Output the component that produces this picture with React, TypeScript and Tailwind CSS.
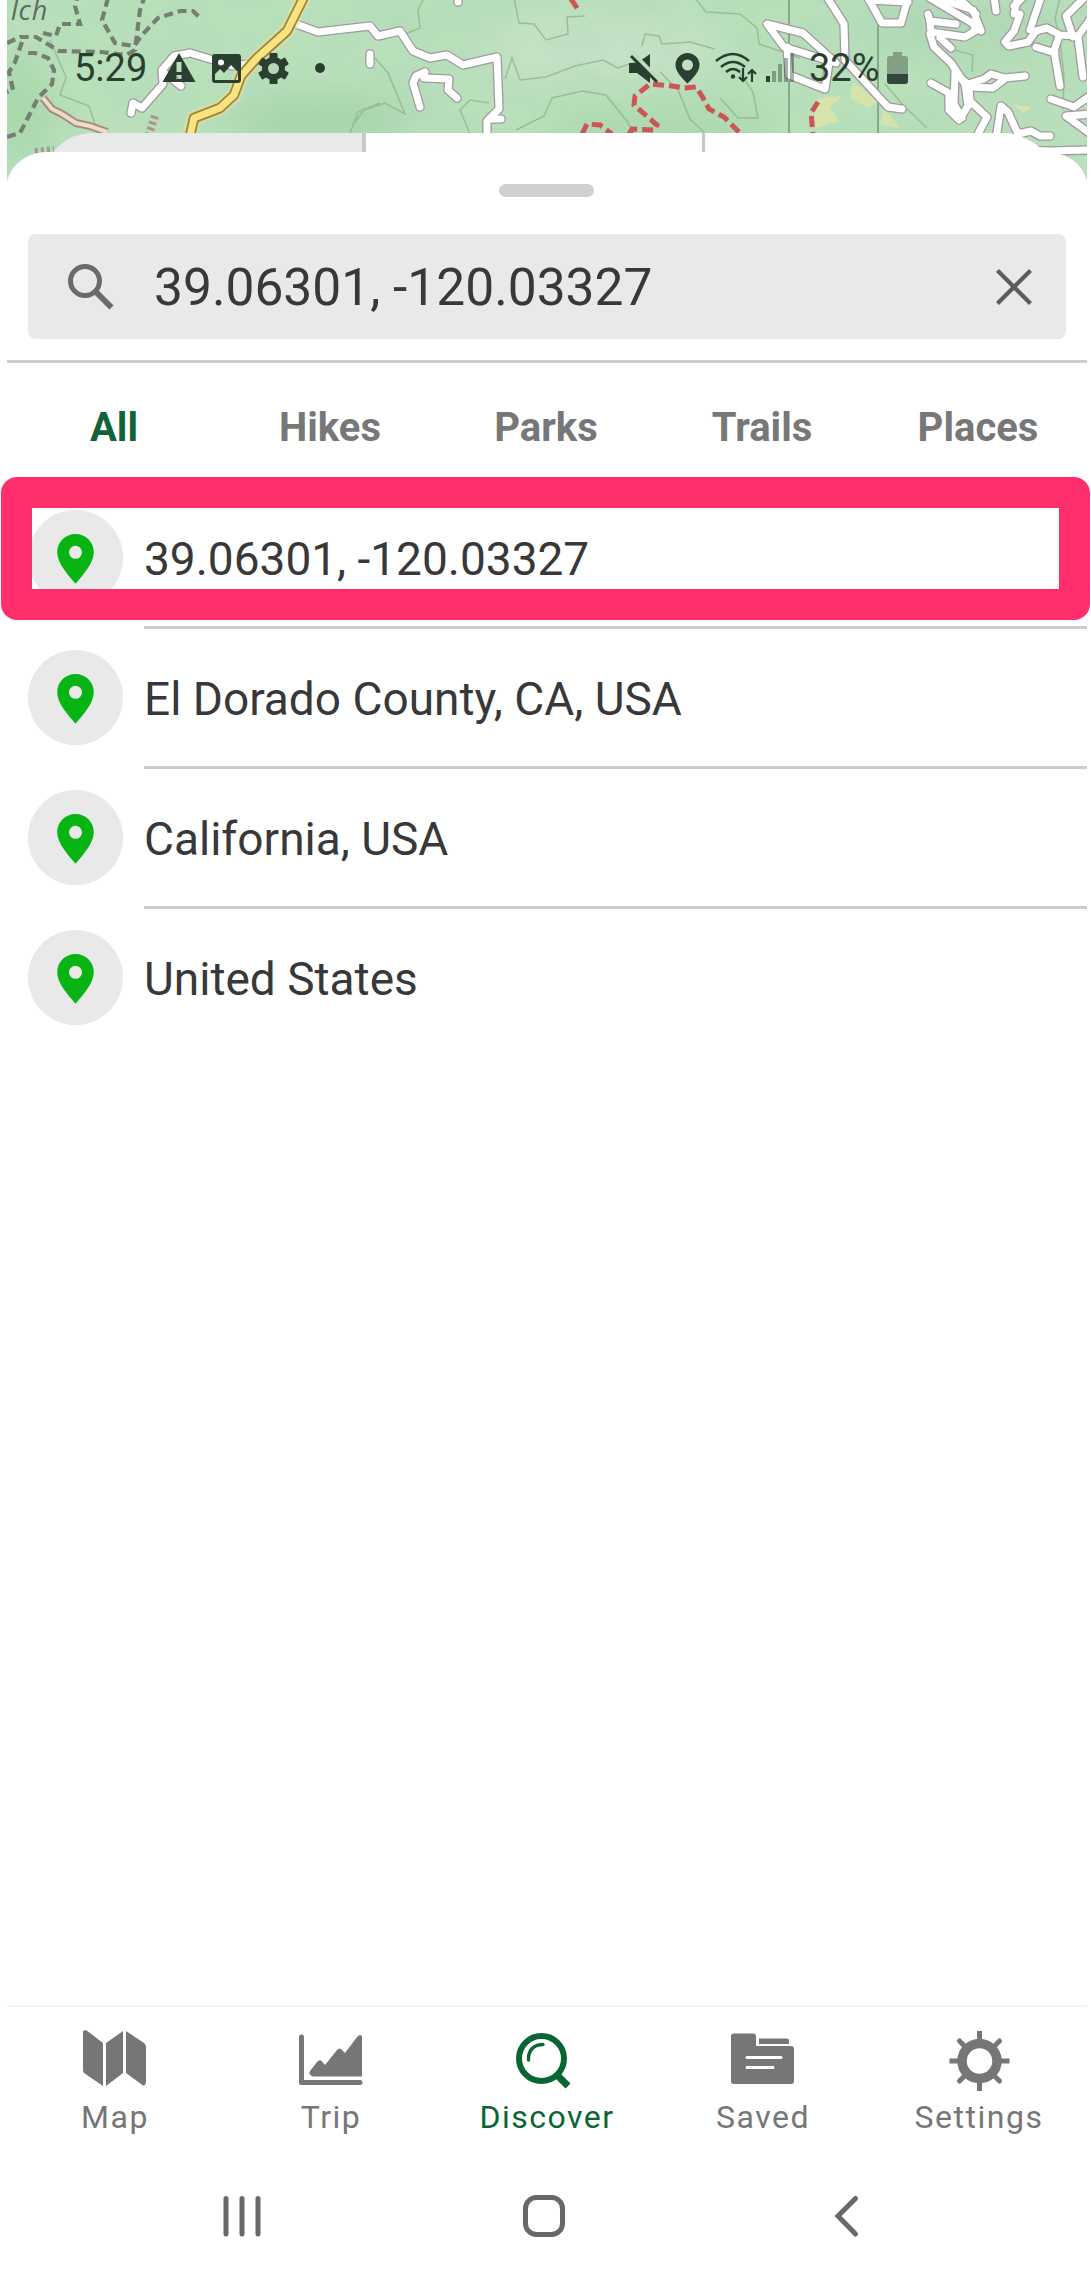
import React from "react";

const ROADS = [
  // west access road
  "M131 113 L133 103 L142 108 L163 84 L162 70 L174 56 L190 53 L210 59 L232 66 L249 64",
  "M163 72 L181 86",
  // central road
  "M296 24 L318 32 L370 26 L378 36 L400 31 L413 51 L430 58 L447 55 L463 65 L497 57 L499 109 L487 121 L487 134",
  "M490 119 L501 119",
  "M370 54 L370 64",
  "M458 2 L458 -4",
  "M420 107 L413 83 L416 76 L425 72 L424 78 L449 79 L448 90 L457 98",
  // east of the status icons
  "M767 24 L803 33 L836 63 L784 47 Z",
  "M787 47 L789 75 L825 89 L829 63",
  "M827 -3 L844 24 L845 60 L888 107 L902 109",
  "M868 -2 L882 23 L901 23 L908 -2 M869 0 L908 2",
  // neighbourhood streets
  "M928 14 L930 21 L956 24",
  "M930 -2 L974 24 L975 31 L965 37 L931 32 L930 22",
  "M934 -3 L973 10 L981 31",
  "M957 -3 L976 14",
  "M930 34 L934 47 L951 63 L965 84 L968 106 L959 120 L949 110 L949 93 L931 83",
  "M940 38 L951 48",
  "M955 72 L954 104 L962 118",
  "M956 75 L968 84 L984 79 L991 74 L1005 78 L1025 76 M1006 78 L993 88 L969 87 L970 101 L987 117 L978 134",
  "M994 -3 L996 11",
  "M1018 -3 L1014 14 L1020 14 L1014 31 L1005 42 L1009 46 L1028 42 L1036 31 L1047 28 L1060 35 L1078 36 L1094 14",
  "M1041 -3 L1030 30 M1023 -3 L1014 6",
  "M1085 -3 L1066 16 L1073 37",
  "M1059 36 L1054 51 L1060 86 M1036 47 L1055 53",
  "M1078 38 L1083 77",
  "M1051 99 L1074 107 L1094 93",
  "M1095 137 L1066 116 L1092 114",
  "M996 139 L1001 106 L1008 112 L1018 134 L1031 131 L1040 136 L1050 136",
  "M1012 150 L1050 151 L1092 150 L1092 129",
];

const TRAILS = [
  "M7 43 L20 37 L36 37 L59 51 L101 52 L126 55 L135 50 L140 10 L144 -2",
  "M7 137 L20 133 L38 98 L52 84 L54 70 L48 58 L35 53 L26 53",
  "M43 33 L56 36 L60 24 L80 24 L75 6 L77 -2",
  "M108 -2 L102 20 L115 43 L134 46 L142 35 L158 18 L180 11 L193 11 L200 18",
  "M22 42 L15 62 L9 72 L13 90 L7 92",
];

const CONTOURS = [
  "M50 40 L66 77 L60 95 L89 106 L97 130",
  "M400 36 L420 28 L418 10 L424 -2",
  "M375 58 L388 73 L405 114 L385 103 L364 110 L355 122",
  "M514 -2 L519 23 L534 24 L546 40 L568 34 L567 17 L585 16",
  "M505 79 L512 58 L520 80 L546 77 L575 66 L603 60 L618 68 L641 60",
  "M516 130 L544 116 L552 98 L582 91 L606 95 L627 121 L634 134",
  "M470 134 L460 110 L470 100 L489 103",
  "M642 46 L645 34 L659 36 L662 44 L690 42 L715 49",
  "M660 72 L678 90 L690 119 L704 132",
  "M695 -2 L706 12 L740 14 L757 28 L759 44 L800 58",
  "M720 98 L738 118 L758 118 L753 92 L738 70",
  "M1060 -2 L1055 18 L1060 40 L1064 76 L1063 110",
  "M350 133 L358 112 L380 103",
  "M954 50 L973 55 L972 72",
  "M885 84 L903 105 L927 128",
];

function MapBackdrop() {
  return (
    <svg className="absolute left-0 top-0 h-[190px] w-[1080px]" viewBox="7 0 1080 190">
      <defs>
        <filter id="relief" x="0" y="0" width="1" height="1">
          <feTurbulence type="fractalNoise" baseFrequency="0.018 0.03" numOctaves="4" seed="7" />
          <feColorMatrix values="0 0 0 0 0.38  0 0 0 0 0.62  0 0 0 0 0.45  0.9 0 0 0 -0.32" />
        </filter>
        <filter id="soft" x="-20%" y="-20%" width="1.4" height="1.4">
          <feGaussianBlur stdDeviation="18" />
        </filter>
      </defs>
      <rect x="7" width="1080" height="190" fill="#b9e0bb" />
      <g filter="url(#soft)">
        <ellipse cx="600" cy="50" rx="120" ry="36" fill="#c6e2c6" />
        <ellipse cx="320" cy="120" rx="90" ry="22" fill="#a5d3aa" />
        <ellipse cx="660" cy="125" rx="120" ry="20" fill="#acd8ae" />
        <ellipse cx="20" cy="110" rx="30" ry="50" fill="#a9d9ab" />
        <ellipse cx="960" cy="30" rx="120" ry="30" fill="#b0dab5" />
      </g>
      <rect x="7" width="1080" height="190" filter="url(#relief)" opacity="0.45" />
      <path d="M820 98 L842 96 L830 108 L840 121 L816 128 L813 108 Z M853 82 L878 101 L868 108 L850 98 Z M884 108 L900 128 L880 124 Z M1012 104 L1031 107 L1024 113 Z" fill="#d6e4ac" />
      <g fill="none" stroke="#93b58c" strokeWidth="1.5" opacity="0.8">
        {CONTOURS.map((d) => (
          <path key={d} d={d} />
        ))}
      </g>
      <path d="M789 0 V133 M878 24 V133" stroke="#84aa87" strokeWidth="2" />
      <g fill="none" stroke="#747e73" strokeWidth="4.2" strokeDasharray="9 5">
        {TRAILS.map((d) => (
          <path key={d} d={d} />
        ))}
      </g>
      <path d="M43 98 L52 109 L62 114 L76 123 L90 126 L107 132" fill="none" stroke="#a48c7e" strokeWidth="8" />
      <path d="M43 98 L52 109 L62 114 L76 123 L90 126 L107 132" fill="none" stroke="#eddccb" strokeWidth="4" />
      <path d="M155 116 L149 134 M35 152 L54 150" stroke="#a8978a" strokeWidth="8" strokeDasharray="3 3" />
      <g fill="none" stroke="#cd5555" strokeWidth="5" strokeDasharray="11 5">
        <path d="M571 -1 L579 11" />
        <path d="M582 134 L587 124 L600 125 L612 134" />
        <path d="M629 134 L632 129 L655 130 L657 125 L634 105 L635 96 L650 84 L672 86 L684 88 L696 87 L702 96 L709 109 L724 117 L741 134" />
        <path d="M818 102 L811 113 L813 134" />
      </g>
      <g fill="none" strokeLinecap="round" strokeLinejoin="round">
        <g stroke="#a29a9f" strokeWidth="9.6">
          {ROADS.map((d) => (
            <path key={d} d={d} />
          ))}
        </g>
        <g stroke="#ffffff" strokeWidth="7">
          {ROADS.map((d) => (
            <path key={d} d={d} />
          ))}
        </g>
      </g>
      <g fill="none" strokeLinejoin="round">
        <path d="M304 -3 L287 31 L256 59 L241 76 L234 95 L220 108 L194 118 L190 136" stroke="#e4dfa6" strokeWidth="16" opacity="0.5" />
        <path d="M304 -3 L287 31 L256 59 L241 76 L234 95 L220 108 L194 118 L190 136" stroke="#9d8730" strokeWidth="10.5" />
        <path d="M304 -3 L287 31 L256 59 L241 76 L234 95 L220 108 L194 118 L190 136" stroke="#fbe384" strokeWidth="7" />
      </g>
      <text x="11" y="20" fontFamily="Open Sans" fontStyle="italic" fontSize="27" letterSpacing="0.8" fill="#5c6b5d">
        lch
      </text>
      {/* card row peeking out from behind the sheet */}
      <path d="M50 156 Q66 133 94 133 H362 V160 H50 Z" fill="#e8e9e9" />
      <path d="M366 133 H1008 Q1032 137 1049 156 V160 H366 Z" fill="#fdfefd" />
      <path d="M364 133 V152 M703.5 133 V152" stroke="#c9c9c9" strokeWidth="3.2" />
      <path d="M7 190 V181 Q14 156 44 152 H1050 Q1080 156 1087 181 V190 Z" fill="#ffffff" />
    </svg>
  );
}

function StatusIconsLeft() {
  return (
    <svg className="h-8 w-[166px]" viewBox="161 52 166 32" fill="#2b3f30">
      <path fillRule="evenodd" d="M179 53 L195.500 82 H162.500 Z M176.500 62 V72 H181.500 V62 Z M176.500 75 V79 H181.500 V75 Z" />
      <path fillRule="evenodd" d="M215 54 H238 Q241 54 241 57 V80 Q241 83 238 83 H215 Q212 83 212 80 V57 Q212 54 215 54 Z M215 74 V80 H238 V72 L231 65 L224 73 L220 69 Z M221 59.500 A3 3 0 1 0 221 65.500 A3 3 0 1 0 221 59.500 Z" />
      <g>
        {[0, 60, 120].map((a) => (
          <rect key={a} x="269.500" y="53" width="8" height="31" rx="1" transform={`rotate(${a} 273.5 68.5)`} />
        ))}
        <circle cx="273.500" cy="68.500" r="11.500" />
        <circle cx="273.500" cy="68.500" r="5.500" fill="#b8d6b5" />
      </g>
      <circle cx="320" cy="68" r="5" />
    </svg>
  );
}

function StatusIconsRight() {
  return (
    <svg className="h-8 w-[168px]" viewBox="628 52 168 32" fill="#2b3f30">
      <path d="M629 63 H637 L650 54 V83 L637 73 H629 Z" />
      <path d="M630 54 L658 83" stroke="#bcdcbb" strokeWidth="4" transform="translate(2 -2)" />
      <path d="M631 56 L657 82" stroke="#2b3f30" strokeWidth="3" />
      <path fillRule="evenodd" d="M687.500 53 A12 12 0 0 1 699.500 65 C699.500 72 692 79 687.500 83.500 C683 79 675.500 72 675.500 65 A12 12 0 0 1 687.500 53 Z M687.500 59.500 A5.500 5.500 0 1 0 687.500 70.500 A5.500 5.500 0 1 0 687.500 59.500 Z" />
      <g fill="none" stroke="#2b3f30" strokeWidth="2.600">
        <path d="M716 61 Q733 47 749 61" />
        <path d="M721 67 Q733 57 745 67" />
        <path d="M726 72 Q733 66 740 72" />
        <path d="M743 68 V81 M739 77 L743 81 L747 77 M752 82 V70 M748 74 L752 70 L756 74" strokeWidth="2.200" />
      </g>
      <circle cx="733" cy="76.500" r="2.200" />
      <rect x="766" y="76" width="4" height="6" />
      <g opacity="0.4">
        <rect x="772" y="71" width="4" height="11" />
        <rect x="778" y="64" width="4" height="18" />
        <rect x="784" y="58" width="4" height="24" />
        <rect x="790" y="53" width="4" height="29" />
      </g>
    </svg>
  );
}

function Battery() {
  return (
    <svg className="h-8 w-[22px]" viewBox="887 52 22 32">
      <path d="M893 52 H902 V56 H905 Q908 56 908 59 V75 H887 V59 Q887 56 890 56 H893 Z" fill="#83a087" />
      <path d="M887 74 H908 V81 Q908 84 905 84 H890 Q887 84 887 81 Z" fill="#33453a" />
    </svg>
  );
}

function StatusBar() {
  return (
    <div className="relative flex h-[136px] items-start pl-[67px] pt-[52px] text-[38px] leading-8 text-[#2b3f30]">
      <span className="w-[87px]">5:29</span>
      <StatusIconsLeft />
      <span className="w-[301px]" />
      <StatusIconsRight />
      <span className="ml-[13px] w-[78px]">32%</span>
      <Battery />
    </div>
  );
}

function SearchBar() {
  return (
    <div className="mx-[21px] mt-[37px] flex h-[105px] items-center rounded-lg bg-[#e9e9e9] pl-10 pr-[34px]">
      <svg className="h-[46px] w-[46px]" viewBox="0 0 46 46" fill="none" stroke="#6a6a6a">
        <circle cx="17" cy="17" r="14.500" strokeWidth="5" />
        <path d="M27.500 27.500 L43.500 43.500" strokeWidth="6" />
      </svg>
      <span className="ml-10 grow pt-[3px] text-[51.500px] leading-[60px] text-[#383838]">39.06301, -120.03327</span>
      <svg className="h-9 w-9" viewBox="0 0 36 36" stroke="#5c5c5c" strokeWidth="4.200">
        <path d="M1.500 1.500 L34.500 34.500 M34.500 1.500 L1.500 34.500" />
      </svg>
    </div>
  );
}

function Tabs() {
  return (
    <div className="flex h-[126px] items-center pt-1 text-center text-[40px] font-bold leading-[48px] text-[#777777]">
      {["All", "Hikes", "Parks", "Trails", "Places"].map((t) => (
        <span key={t} className={t === "All" ? "w-[216px] pr-0.5 text-[#126339]" : "w-[216px] pr-0.5"}>
          {t}
        </span>
      ))}
    </div>
  );
}

function ResultRow({ label, last }: { label: string; last?: boolean }) {
  return (
    <div className="flex h-[140px] pl-[21px]">
      <div className="mt-[21px] flex h-[95px] w-[95px] justify-center rounded-full bg-[#e9e9e9] pt-6">
        <svg className="h-[50px] w-[37px]" viewBox="0 0 37 50">
          <path
            fillRule="evenodd"
            fill="#08b414"
            d="M18.500 0 C28.700 0 36.800 8 36.800 18.200 C36.800 29 26 41 18.500 49.700 C11 41 .2 29 .2 18.200 C.2 8 8.300 0 18.500 0 Z M18.500 11.800 A6.500 6.500 0 1 0 18.500 24.800 A6.500 6.500 0 1 0 18.500 11.800 Z"
          />
        </svg>
      </div>
      <div
        className={
          last
            ? "ml-[21px] flex grow items-center pb-[3px] pt-0.5 text-[46px] leading-[54px] text-[#383838]"
            : "ml-[21px] flex grow items-center border-b-[3px] border-[#cdcdcd] pt-0.5 text-[46px] leading-[54px] text-[#383838]"
        }
      >
        {label}
      </div>
    </div>
  );
}

const MapIcon = (
  <path d="M0 1.500 Q2 -1 5 1.500 L20 13 V56 L1 43 Q0 42 0 40 Z M23 13 L40 1 V43 L23 56 Z M43 1 L61 13 Q63 14.500 63 17 V52 Q62 58 58 54 L43 43 Z" />
);
const TripIcon = (
  <>
    <path d="M2.500 7 V52.500 H61" fill="none" stroke="currentColor" strokeWidth="5" strokeLinecap="round" strokeLinejoin="round" />
    <path d="M11 41 L18 32 Q20.500 29 23 31.500 L26 35 L38 20 Q40.500 17 43 20 L46 23 L58 7 Q62 3 63 7 V46.500 H14 Q9 45 11 41 Z" />
  </>
);
const DiscoverIcon = (
  <g fill="none" stroke="currentColor">
    <circle cx="26.500" cy="28.500" r="22.500" strokeWidth="6" />
    <path d="M41 44 L53 56" strokeWidth="7" />
    <path d="M13.500 30 C13 20 19 14.500 28 14.500" strokeWidth="3.400" strokeLinecap="round" />
  </g>
);
const SavedIcon = (
  <>
    <path d="M3 3.500 H22 Q25 3.500 25 6 V16 H60 Q63 16 63 19 V51 Q63 54 60 54 H3 Q0 54 0 51 V6 Q0 3.500 3 3.500 Z" />
    <path d="M28 8.500 H56 Q58 8.500 58 10.500 V14 H28 Z" />
    <path d="M16 27.500 H50 M16 37.500 H42" stroke="#ffffff" strokeWidth="3" strokeLinecap="round" />
  </>
);
const SettingsIcon = (
  <>
    <path d="M32.500 1 V61 M2.500 31 H62.500" stroke="currentColor" strokeWidth="5" />
    <path d="M12.500 11 L52.500 51 M52.500 11 L12.500 51" stroke="currentColor" strokeWidth="5" strokeLinecap="round" />
    <circle cx="32.500" cy="31" r="17.500" fill="#ffffff" stroke="currentColor" strokeWidth="9.500" />
  </>
);

const NAV = [
  { label: "Map", icon: MapIcon },
  { label: "Trip", icon: TripIcon },
  { label: "Discover", icon: DiscoverIcon },
  { label: "Saved", icon: SavedIcon },
  { label: "Settings", icon: SettingsIcon },
];

function BottomNav() {
  return (
    <div className="flex h-[158px] border-t-2 border-[#f4f4f4] text-[#767676]">
      {NAV.map(({ label, icon }) => (
        <div
          key={label}
          className={
            label === "Discover"
              ? "flex w-[216px] flex-col items-center pt-[23px] text-[#0a6535]"
              : "flex w-[216px] flex-col items-center pt-[23px]"
          }
        >
          <svg className="mr-0.5 h-[62px] w-[63px] overflow-visible" viewBox="0 0 63 62" fill="currentColor">
            {icon}
          </svg>
          <span className="mt-1.5 text-[32px] leading-[38px] tracking-[1.500px]">{label}</span>
        </div>
      ))}
    </div>
  );
}

function SystemNav() {
  return (
    <div className="flex h-[117px] items-start pl-[216px] pt-[31px]">
      <svg className="h-[44px] w-[640px]" viewBox="223 2194 640 44" fill="none" stroke="#686868" strokeWidth="5" strokeLinecap="round">
        <path d="M226 2198.500 V2234 M242 2198.500 V2234 M258 2198.500 V2234" />
        <rect x="525.500" y="2197.500" width="37" height="37" rx="11" />
        <path d="M855.500 2198.500 L838 2216 L855.500 2234" />
      </svg>
    </div>
  );
}

export default function App() {
  return (
    <div className="relative h-[2280px] w-[1091px] overflow-hidden bg-white font-['Roboto',sans-serif]">
      <div className="relative ml-[7px] flex h-[2280px] w-[1080px] flex-col">
        <MapBackdrop />
        <StatusBar />
        <div className="relative flex grow flex-col">
          <div className="ml-[492px] mt-12 h-[13px] w-[95px] rounded-full bg-[#d0d0d0]" />
          <SearchBar />
          <div className="mt-[21px] h-[3px] bg-[#cecece]" />
          <Tabs />
          <ResultRow label="39.06301, -120.03327" />
          <ResultRow label="El Dorado County, CA, USA" />
          <ResultRow label="California, USA" />
          <ResultRow label="United States" last />
          <div className="grow" />
          <BottomNav />
          <SystemNav />
        </div>
      </div>
      {/* highlight ring over the first result */}
      <div className="absolute left-px top-[477px] h-[143px] w-[1089px] rounded-2xl border-[31px] border-[#ff2f6c]" />
    </div>
  );
}
